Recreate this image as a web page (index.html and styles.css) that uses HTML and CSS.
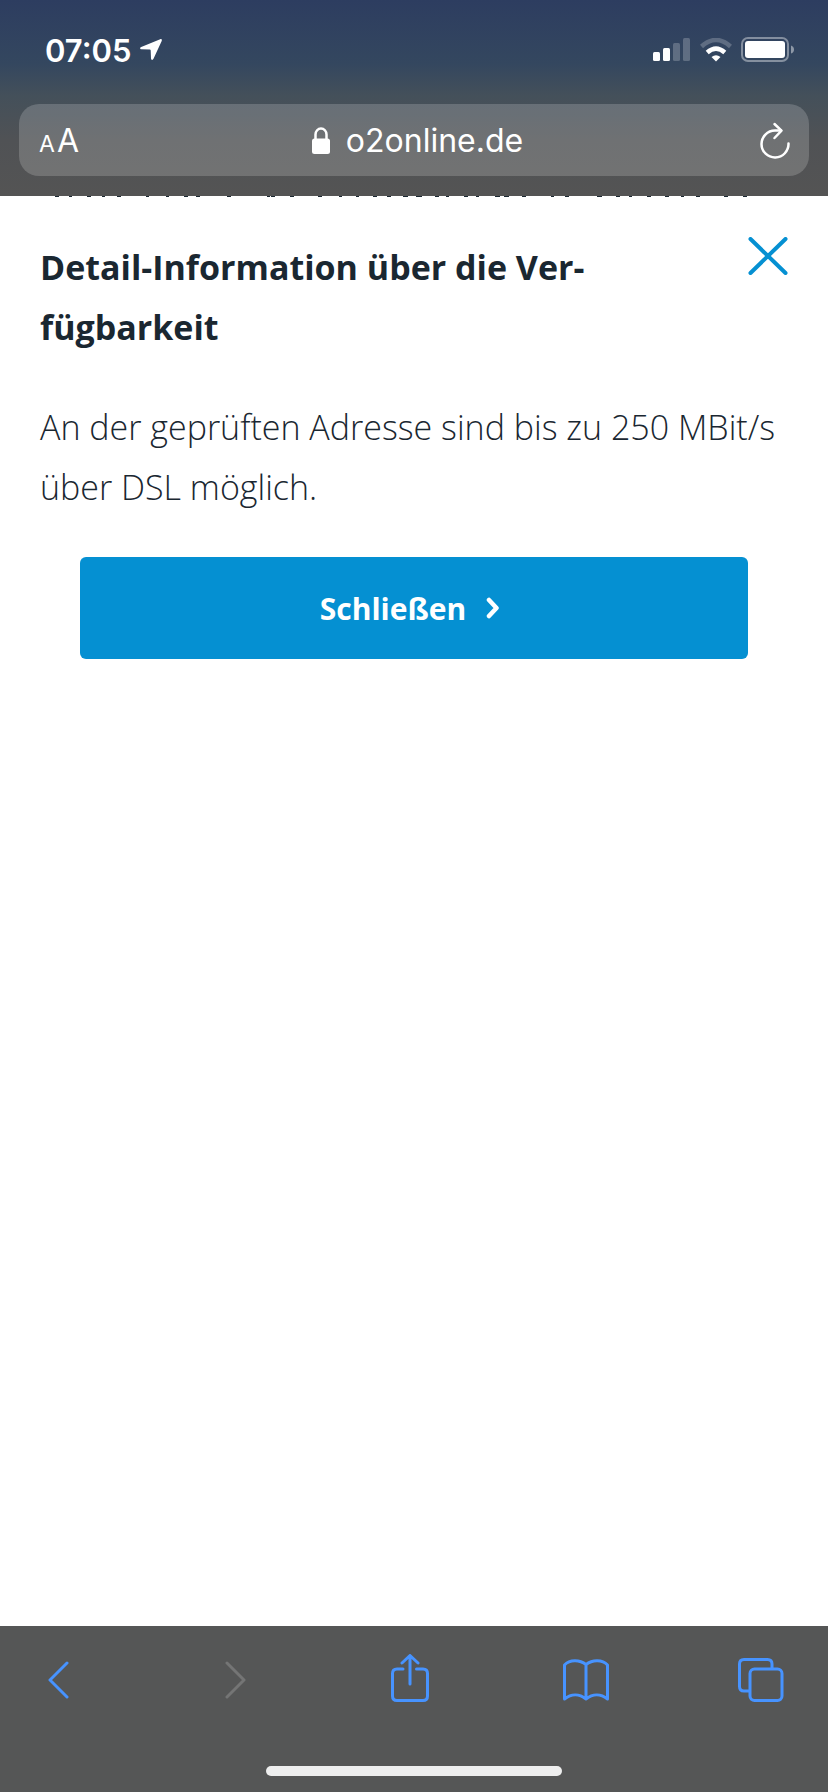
FILE: index.html
```
<!DOCTYPE html>
<html lang="de">
<head>
    <meta charset="UTF-8">
    <meta name="viewport" content="width=device-width, initial-scale=1.0">
    <title>Detail-Information über die Verfügbarkeit</title>
    <link rel="stylesheet" href="styles.css">
</head>
<body>
    <header class="browser-top">
        <!-- Statusleiste -->
        <div class="status-bar">
            <div class="status-left">
                <span class="time">07:05</span>
                <svg class="location" width="22" height="22" viewBox="0 0 22 22" fill="#fff">
                    <path d="M20.2 .2 1.2 8C-.4 8.700-.2 10.200 1.500 10.300L9.800 10.600Q10.600 10.700 10.700 11.500L11 19.500C11.100 21.200 12.800 21.400 13.500 19.800L21.700 1.900C22.200 .7 21.400-.3 20.200 .2Z"/>
                </svg>
            </div>
            <div class="status-right">
                <svg width="38" height="24" viewBox="0 0 38 24" fill="#fff">
                    <rect x="0" y="14" width="7" height="9" rx="1.500"/>
                    <rect x="10" y="10" width="7" height="13" rx="1.500"/>
                    <rect x="20" y="5" width="7" height="18" rx="1.500" opacity=".22"/>
                    <rect x="30" y="0" width="7" height="23" rx="1.500" opacity=".22"/>
                </svg>
                <svg width="32" height="24" viewBox="0 0 32 24" fill="none" stroke="#fff">
                    <path d="M1.500 8.500Q16-4.500 30.500 8.500" stroke-width="4.500" opacity=".22"/>
                    <path d="M7.200 14.500Q16 6.700 24.800 14.500" stroke-width="4.500"/>
                    <path d="M11.500 19Q16 15.500 20.500 19L16 23.500Z" fill="#fff" stroke="none"/>
                </svg>
                <svg width="54" height="26" viewBox="0 0 54 26">
                    <rect x="1" y="1" width="46" height="23" rx="6" fill="none" stroke="#fff" stroke-width="2" opacity=".4"/>
                    <rect x="4" y="4" width="40" height="17" rx="3" fill="#fff"/>
                    <path d="M50 8.500Q53 9.500 53 12.500T50 16.500Z" fill="#fff" opacity=".45"/>
                </svg>
            </div>
        </div>

        <!-- Adressleiste -->
        <div class="address-bar">
            <button type="button" class="icon-button text-size" aria-label="Textgröße"><span class="small-a">A</span><span class="big-a">A</span></button>
            <div class="domain">
                <svg width="18" height="27" viewBox="0 0 18 27">
                    <path d="M3.500 13V7.500a5.500 6 0 0 1 11 0V13" fill="none" stroke="#fff" stroke-width="2.500"/>
                    <rect x="0" y="11.500" width="18" height="15.500" rx="2.500" fill="#fff"/>
                </svg>
                <span>o2online.de</span>
            </div>
            <button type="button" class="icon-button" aria-label="Neu laden">
                <svg width="30" height="37" viewBox="0 0 30 37" fill="none" stroke="#fff" stroke-width="2.500" stroke-linecap="round" stroke-linejoin="round">
                    <path d="M28.500 21.500A13.500 13.500 0 1 1 15 8.500H21"/>
                    <path d="M14.500 2 21.500 8.700 14.500 16"/>
                </svg>
            </button>
        </div>
    </header>

    <main class="dialog">
        <!-- Rand der darüberliegenden Zeile, von der Leiste verdeckt -->
        <svg class="scrolled-line" viewBox="0 0 828 1" preserveAspectRatio="none" aria-hidden="true">
            <path d="M55 .5h4m10 0h3m15 0h4m11 0h3m12 0h4m25 0h3m17 0h3m15 0h4m8 0h4m27 0h4m36 0h3m1 0h4m15 0h4m24 0h4m17 0h3m14 0h3m14 0h4m10 0h4m12 0h5m8 0h6m13 0h4m7 0h3m15 0h4m8 0h3m16 0h5m4 0h5m13 0h4m25 0h3m11 0h4m28 0h5m14 0h4m9 0h3m15 0h4m14 0h4m12 0h3m12 0h4m24 0h4m15 0h4" stroke="#1a2731"/>
        </svg>

        <div class="dialog-head">
            <h1>Detail-Information über die Ver-<br>fügbarkeit</h1>
            <button type="button" class="icon-button close" aria-label="Fenster schließen">
                <svg width="40" height="38" viewBox="0 0 40 38" fill="none" stroke="#0590d2" stroke-width="4" stroke-linecap="round">
                    <path d="M2.500 2 37.500 36M37.500 2 2.500 36"/>
                </svg>
            </button>
        </div>

        <p>An der geprüften Adresse sind bis zu 250 MBit/s über DSL möglich.</p>

        <button type="button" class="primary-button">
            <span>Schließen</span>
            <svg width="14" height="22" viewBox="0 0 14 22" fill="none" stroke="#fff" stroke-width="4.500" stroke-linecap="round" stroke-linejoin="round">
                <path d="M3 3 10.500 11 3 19"/>
            </svg>
        </button>
    </main>

    <footer class="browser-bottom">
        <nav class="toolbar">
            <button type="button" class="icon-button" aria-label="Zurück">
                <svg width="22" height="48" viewBox="0 0 22 48">
                    <path d="M19 9 2 26 19 43"/>
                </svg>
            </button>
            <button type="button" class="icon-button" aria-label="Vorwärts" disabled>
                <svg width="22" height="48" viewBox="0 0 22 48">
                    <path d="M3 9 20 26 3 43"/>
                </svg>
            </button>
            <button type="button" class="icon-button" aria-label="Teilen">
                <svg width="40" height="48" viewBox="0 0 40 48">
                    <path d="M13 15H7Q2.500 15 2.500 19.500V42Q2.500 46.500 7 46.500H33Q37.500 46.500 37.500 42V19.500Q37.500 15 33 15H26.500"/>
                    <path d="M20 30V2M12 9 20 1.500 28 9"/>
                </svg>
            </button>
            <button type="button" class="icon-button" aria-label="Lesezeichen">
                <svg width="48" height="48" viewBox="0 0 48 48">
                    <path d="M24 45V10.500C18 6 8 5 2.500 11V45C9 40 17 39.500 24 45C31 39.500 39 40 45.500 45V11C40 5 30 6 24 10.500"/>
                </svg>
            </button>
            <button type="button" class="icon-button" aria-label="Tabs">
                <svg width="46" height="48" viewBox="0 0 46 48">
                    <path d="M11 37H6Q1.500 37 1.500 32.500V10Q1.500 5.500 6 5.500H29.500Q34 5.500 34 10V14"/>
                    <rect x="12" y="15" width="32" height="31.500" rx="4.500"/>
                </svg>
            </button>
        </nav>
        <div class="home-indicator"></div>
    </footer>
</body>
</html>
```
FILE: styles.css
```
* {
    box-sizing: border-box;
}

body {
    margin: 0;
    min-height: 100vh;
    display: flex;
    flex-direction: column;
    background-color: #fff;
    color: #1a2731;
    font-family: "Open Sans", "Noto Sans", sans-serif;
}

svg {
    display: block;
}

button {
    font-family: inherit;
    cursor: pointer;
}

.icon-button {
    display: flex;
    padding: 0;
    border: 0;
    background: none;
    color: inherit;
}

/* Browserleiste oben */
.browser-top {
    padding: 0 19px 20px;
    background: linear-gradient(#2d3d60 0, #34475f 64px, #44505a 96px, #505255 140px, #545454 196px);
    color: #fff;
    font-family: Inter, sans-serif;
}

.status-bar {
    display: flex;
    justify-content: space-between;
    align-items: center;
    height: 104px;
    padding: 0 14px 4px 26px;
}

.status-left {
    display: flex;
    align-items: center;
    gap: 8px;
}

.time {
    font-size: 31px;
    font-weight: 600;
}

.status-right {
    display: flex;
    align-items: center;
    gap: 9px;
}

.address-bar {
    display: grid;
    grid-template-columns: 1fr auto 1fr;
    align-items: center;
    height: 72px;
    padding: 0 19px 0 20px;
    border-radius: 20px;
    background-color: rgba(255, 255, 255, 0.18);
}

.address-bar > :last-child {
    justify-self: end;
}

.text-size {
    align-items: baseline;
    gap: 2px;
}

.small-a {
    font-size: 23px;
}

.big-a {
    font-size: 32px;
}

.domain {
    display: flex;
    align-items: center;
    gap: 16px;
    padding-left: 6px;
    font-size: 32px;
}

/* Inhalt */
.dialog {
    flex: 1;
    padding-bottom: 40px;
}

.scrolled-line {
    width: 100%;
    height: 1px;
}

.dialog-head {
    display: flex;
    justify-content: space-between;
    padding: 40px 40px 0;
}

h1 {
    margin: 0;
    font-size: 34px;
    font-weight: 700;
    line-height: 60px;
}

.close {
    align-self: flex-start;
}

p {
    margin: 40px 0;
    padding: 0 40px;
    font-size: 34px;
    font-weight: 300;
    line-height: 60px;
}

.primary-button {
    display: flex;
    justify-content: center;
    align-items: center;
    gap: 20px;
    width: calc(100% - 160px);
    height: 102px;
    margin: 0 auto;
    padding: 0 8px 0 0;
    border: 0;
    border-radius: 6px;
    background-color: #0590d2;
    color: #fff;
    font-size: 30px;
    font-weight: 700;
}

/* Browserleiste unten */
.browser-bottom {
    padding: 28px 0 16px;
    background-color: #555656;
}

.toolbar {
    display: flex;
    justify-content: space-between;
    padding: 0 43px 0 35px;
    color: #4793ff;
}

.toolbar button {
    width: 48px;
    justify-content: center;
}

.toolbar svg {
    fill: none;
    stroke: currentColor;
    stroke-width: 3;
    stroke-linecap: round;
    stroke-linejoin: round;
}

.toolbar button:disabled {
    color: #747575;
    cursor: default;
}

.home-indicator {
    width: 296px;
    height: 10px;
    margin: 64px auto 0;
    border-radius: 5px;
    background-color: #eee;
}
```
